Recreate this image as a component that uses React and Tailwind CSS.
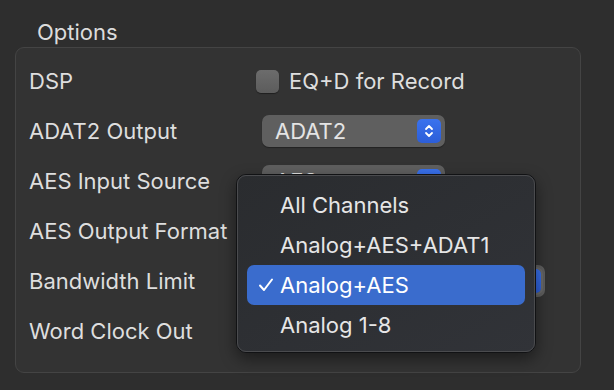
import React from "react";

const font = { fontFamily: "Inter, 'Noto Sans', sans-serif" };

const Stepper = ({ ring = false }) => (
  <span
    className={
      "flex h-[24px] w-[24px] items-center justify-center rounded-[5px] bg-gradient-to-b from-[#3a72ee] to-[#2c5ed8] " +
      (ring ? "ring-2 ring-[#6a6a6a]" : "")
    }
  >
    <svg width="12" height="16" viewBox="0 0 12 16" fill="none">
      <path d="M3 6l3-3 3 3" stroke="white" strokeWidth="1.8" strokeLinecap="round" strokeLinejoin="round" />
      <path d="M3 10l3 3 3-3" stroke="white" strokeWidth="1.8" strokeLinecap="round" strokeLinejoin="round" />
    </svg>
  </span>
);

const PopUp = ({ label, width = "w-[183px]" }) => (
  <div
    className={`ml-[6px] flex h-[32px] ${width} items-center justify-between rounded-[7px] bg-[#5f5f5f] pl-[13px] pr-[4px] shadow-[0_1px_1px_rgba(0,0,0,0.35)]`}
  >
    <span className="text-[22px] leading-none text-[#e4e4e4]">{label}</span>
    <Stepper />
  </div>
);

const Row = ({ label, children }) => (
  <div className="flex h-[50px] items-center">
    <div className="w-[227px] text-[22px] leading-none text-[#dedede]">{label}</div>
    {children}
  </div>
);

const items = ["All Channels", "Analog+AES+ADAT1", "Analog+AES", "Analog 1-8"];

export default function App() {
  return (
    <div className="relative h-[390px] w-[614px] overflow-hidden bg-[#2e2e2e] px-[15px] pt-[19px]" style={font}>
      <div className="pl-[22px] text-[22px] leading-[26px] text-[#dcdcdc]">Options</div>
      <div className="mt-[2px] h-[326px] w-[566px] rounded-[9px] border border-[#444444] bg-[#333333] pl-[13px] pt-[8px]">
        <Row label="DSP">
          <div className="flex items-center gap-[10px]">
            <span className="h-[23px] w-[23px] rounded-[5px] bg-gradient-to-b from-[#6c6c6c] to-[#5c5c5c] shadow-[0_1px_1px_rgba(0,0,0,0.4)]" />
            <span className="text-[22px] leading-none text-[#dedede]">EQ+D for Record</span>
          </div>
        </Row>
        <Row label="ADAT2 Output">
          <PopUp label="ADAT2" />
        </Row>
        <Row label="AES Input Source">
          <PopUp label="AES" />
        </Row>
        <Row label="AES Output Format">
          <PopUp label="" />
        </Row>
        <Row label="Bandwidth Limit">
          <div className="ml-[6px] flex h-[32px] w-[283px] items-center justify-end rounded-[7px] bg-[#5f5f5f] pr-[4px]">
            <Stepper ring />
          </div>
        </Row>
        <Row label="Word Clock Out">
          <PopUp label="" />
        </Row>
      </div>

      <div className="absolute left-[236px] top-[174px] h-[179px] w-[300px] rounded-[10px] border border-[#111214] bg-gradient-to-br from-[#2a2c2f] to-[#313338] shadow-[0_6px_16px_rgba(0,0,0,0.45)]">
        <div className="h-full w-full rounded-[9px] border border-[#4a4b4e] px-[9px] py-[9px]">
          {items.map(item => {
            const active = item === "Analog+AES";
            return (
              <div
                key={item}
                className={
                  "flex h-[40px] items-center rounded-[7px] " +
                  (active ? "bg-[#3a6ccd] text-white" : "text-[#e6e6e6]")
                }
              >
                <span className="flex w-[33px] justify-center pl-[4px]">
                  {active && (
                    <svg width="16" height="14" viewBox="0 0 16 14" fill="none">
                      <path d="M2 7.5l4 4.5L14 1.5" stroke="white" strokeWidth="2" strokeLinecap="round" strokeLinejoin="round" />
                    </svg>
                  )}
                </span>
                <span className="text-[22px] leading-none">{item}</span>
              </div>
            );
          })}
        </div>
      </div>
    </div>
  );
}
